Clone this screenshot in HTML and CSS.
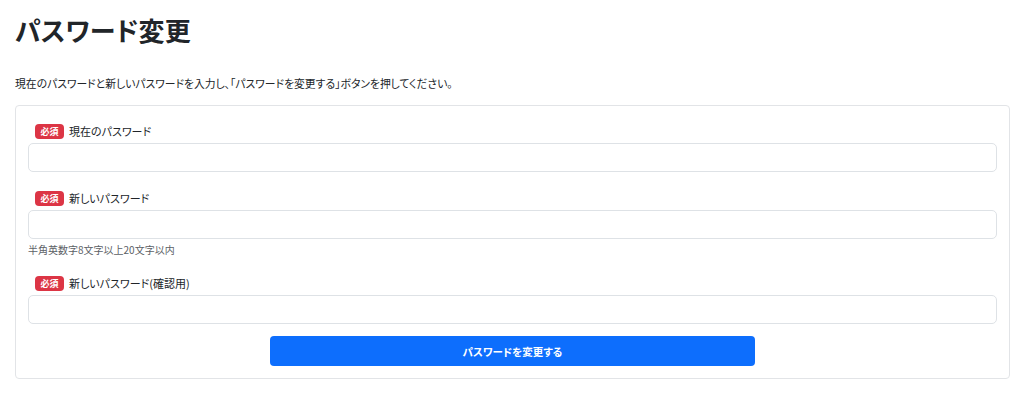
FILE: index.html
```html
<!DOCTYPE html>
<html lang="ja">
<head>
<meta charset="utf-8">
<title>パスワード変更</title>
<link rel="stylesheet" href="styles.css">
</head>
<body>
<main class="page">
  <h1 class="title">パスワード変更</h1>
  <p class="lead">現在のパスワードと新しいパスワードを入力し、「パスワードを変更する」ボタンを押してください。</p>
  <form class="card">
    <div class="field">
      <label class="label"><span class="badge">必須</span>現在のパスワード</label>
      <input class="input" type="password">
    </div>
    <div class="field">
      <label class="label"><span class="badge">必須</span>新しいパスワード</label>
      <input class="input" type="password">
      <div class="hint">半角英数字8文字以上20文字以内</div>
    </div>
    <div class="field">
      <label class="label"><span class="badge">必須</span>新しいパスワード(確認用)</label>
      <input class="input" type="password">
    </div>
    <div class="actions">
      <button class="btn" type="button">パスワードを変更する</button>
    </div>
  </form>
</main>
</body>
</html>
```

FILE: styles.css
```css
html, body {
  margin: 0;
  padding: 0;
  background: #fff;
}
body {
  font-family: "Noto Sans CJK JP", "Noto Sans", sans-serif;
  color: #212529;
  font-feature-settings: "palt";
}
.page {
  padding: 0 14px 0 15px;
}
.title {
  margin: 0;
  padding-top: 14px;
  font-size: 26px;
  line-height: 32px;
  font-weight: 700;
  letter-spacing: 0.2px;
}
.lead {
  margin: 29px 0 0;
  font-size: 10.8px;
  line-height: 16px;
}
.card {
  margin-top: 14px;
  border: 1px solid #e2e4e7;
  border-radius: 4px;
  padding: 13px 12px 12px;
}
.field + .field {
  margin-top: 14px;
}
.label {
  display: flex;
  align-items: center;
  height: 24px;
  padding-left: 7px;
  font-size: 11px;
}
.badge {
  display: inline-flex;
  align-items: center;
  justify-content: center;
  width: 29px;
  height: 15px;
  margin-right: 5px;
  border-radius: 4px;
  background: #dc3545;
  color: #fff;
  font-size: 9px;
  font-weight: 700;
}
.input {
  display: block;
  box-sizing: border-box;
  width: 100%;
  height: 29px;
  margin: 0;
  border: 1px solid #dee2e6;
  border-radius: 5px;
  background: #fff;
  outline: none;
}
.hint {
  margin-top: 4px;
  font-size: 10px;
  line-height: 14px;
  color: #5c6166;
}
.actions {
  display: flex;
  justify-content: center;
  margin-top: 12px;
}
.btn {
  width: 50%;
  height: 30px;
  border: 0;
  border-radius: 4px;
  background: #0d6efd;
  color: #fff;
  font-family: inherit;
  font-feature-settings: "palt";
  font-size: 10.5px;
  font-weight: 700;
}
```
